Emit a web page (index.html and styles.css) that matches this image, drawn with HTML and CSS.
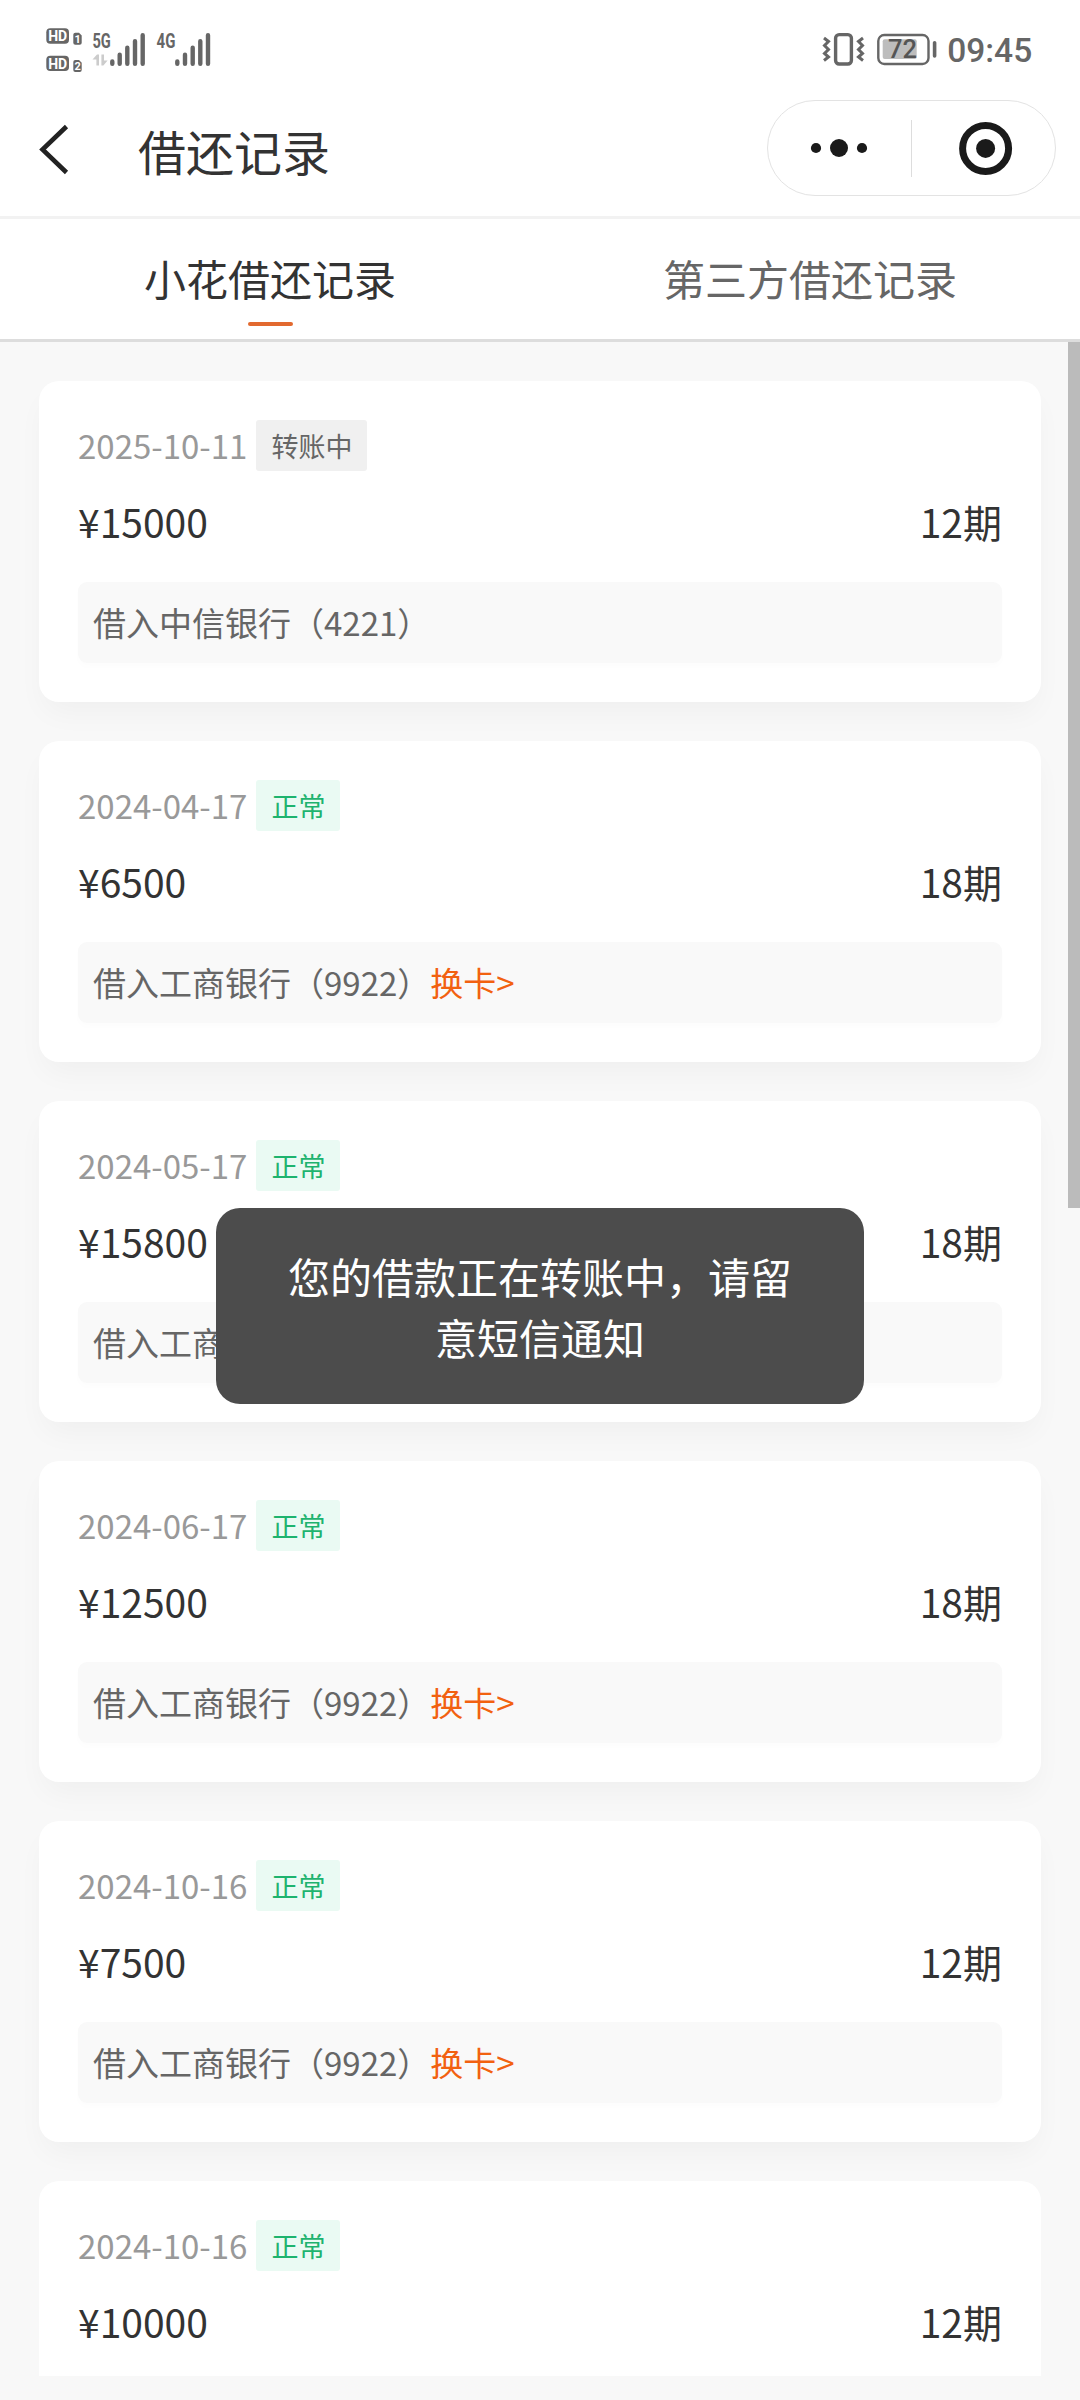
FILE: index.html
```html
<!DOCTYPE html>
<html lang="zh-CN">
<head>
<meta charset="utf-8">
<title>借还记录</title>
<link rel="stylesheet" href="styles.css">
</head>
<body>
<div class="screen">
  <header class="status">
    <svg class="status-left" width="190" height="80" viewBox="0 0 190 80" fill="#666">
      <rect x="16.3" y="18.3" width="22.7" height="15.4" rx="4"/>
      <path d="M45.3 22.7H49L51.7 25.4V32.7A2 2 0 0 1 49.7 34.7H45.3A2 2 0 0 1 43.3 32.7V24.7A2 2 0 0 1 45.3 22.7Z"/>
      <rect x="16.3" y="45.7" width="22.7" height="15.4" rx="4"/>
      <path d="M45.3 50H49L51.7 52.7V60A2 2 0 0 1 49.7 62H45.3A2 2 0 0 1 43.3 60V52A2 2 0 0 1 45.3 50Z"/>
      <g class="hd">
        <text x="18.2" y="31.2" textLength="19" lengthAdjust="spacingAndGlyphs">HD</text>
        <text x="18.2" y="58.6" textLength="19" lengthAdjust="spacingAndGlyphs">HD</text>
      </g>
      <g class="sim">
        <text x="44.6" y="32.8">1</text>
        <text x="44.6" y="60.1">2</text>
      </g>
      <g class="net">
        <text x="62.4" y="37.6" textLength="18.4" lengthAdjust="spacingAndGlyphs">5G</text>
        <text x="126.6" y="37.6" textLength="18.8" lengthAdjust="spacingAndGlyphs">4G</text>
      </g>
      <path d="M62.5 49.6L67 44.6H69V55.4H66.4V49.6ZM71.4 44.6H74V50.6H77.6L73.4 55.4H71.4Z" fill="#ccc"/>
      <g stroke="#666" stroke-width="4.4" stroke-linecap="round">
        <path d="M82.3 51.4V53.8M89.7 44.8V53.8M97.3 37.8V53.8M105 31.2V53.8M112.7 25.2V53.8"/>
        <path d="M147.3 51.4V53.8M155 44.8V53.8M162.7 37.8V53.8M170.3 31.2V53.8M178 25.2V53.8"/>
      </g>
    </svg>
    <svg class="status-right" width="260" height="80" viewBox="0 0 260 80" fill="none" stroke="#666">
      <rect x="35.6" y="24.6" width="15.8" height="29.4" rx="3.5" stroke-width="3.4"/>
      <path d="M24 28L28.5 31.5L24.5 35.5L28.5 39.5L24.5 43.5L28.5 47L24 50.5M63 28L58.5 31.5L62.5 35.5L58.5 39.5L62.5 43.5L58.5 47L63 50.5" stroke-width="3"/>
      <rect x="78.3" y="25" width="50.2" height="29" rx="6" stroke-width="2.4"/>
      <rect x="82.7" y="29.3" width="34" height="19.7" rx="2" fill="#bdbdbd" stroke="none"/>
      <path d="M134.6 32.8V46" stroke-width="3.6" stroke-linecap="round"/>
      <text class="battery" x="88" y="48.4" textLength="29" lengthAdjust="spacingAndGlyphs">72</text>
      <text class="time" x="147.2" y="51.6" textLength="85" lengthAdjust="spacingAndGlyphs">09:45</text>
    </svg>
  </header>

  <nav class="nav">
    <svg class="back" width="30" height="52" viewBox="0 0 30 52" fill="none" stroke="#222" stroke-width="4.6"><path d="M27.5 3.5L3.5 26.5L27.5 49.5"/></svg>
    <h1 class="title">借还记录</h1>
    <div class="capsule">
      <svg class="more" width="143" height="94" viewBox="0 0 143 94" fill="#1a1a1a"><circle cx="48" cy="47" r="5.1"/><circle cx="71" cy="47" r="9"/><circle cx="94" cy="47" r="5.1"/></svg>
      <span class="divider"></span>
      <svg class="close" width="143" height="94" viewBox="0 0 143 94"><circle cx="73.6" cy="47.4" r="23" fill="none" stroke="#1a1a1a" stroke-width="7"/><circle cx="73.6" cy="47.4" r="9.5" fill="#1a1a1a"/></svg>
    </div>
  </nav>

  <div class="tabs">
    <div class="tab active">小花借还记录</div>
    <div class="tab">第三方借还记录</div>
  </div>

  <main class="list">
    <section class="card">
      <div class="head"><span class="date">2025-10-11</span><span class="badge pending">转账中</span></div>
      <div class="sum"><span>¥15000</span><span>12期</span></div>
      <div class="bank">借入中信银行（4221）</div>
    </section>
    <section class="card">
      <div class="head"><span class="date">2024-04-17</span><span class="badge">正常</span></div>
      <div class="sum"><span>¥6500</span><span>18期</span></div>
      <div class="bank">借入工商银行（9922）<a class="swap">换卡&gt;</a></div>
    </section>
    <section class="card">
      <div class="head"><span class="date">2024-05-17</span><span class="badge">正常</span></div>
      <div class="sum"><span>¥15800</span><span>18期</span></div>
      <div class="bank">借入工商</div>
    </section>
    <section class="card">
      <div class="head"><span class="date">2024-06-17</span><span class="badge">正常</span></div>
      <div class="sum"><span>¥12500</span><span>18期</span></div>
      <div class="bank">借入工商银行（9922）<a class="swap">换卡&gt;</a></div>
    </section>
    <section class="card">
      <div class="head"><span class="date">2024-10-16</span><span class="badge">正常</span></div>
      <div class="sum"><span>¥7500</span><span>12期</span></div>
      <div class="bank">借入工商银行（9922）<a class="swap">换卡&gt;</a></div>
    </section>
    <section class="card cut">
      <div class="head"><span class="date">2024-10-16</span><span class="badge">正常</span></div>
      <div class="sum"><span>¥10000</span><span>12期</span></div>
    </section>
    <div class="scrollbar"></div>
  </main>

  <div class="toast">您的借款正在转账中，请留意短信通知</div>
</div>
</body>
</html>
```
FILE: styles.css
```css
* { box-sizing: border-box; }

body {
  margin: 0;
  background: #f8f8f8;
  color: #333;
  font-family: "Noto Sans CJK SC", sans-serif;
}

.screen {
  position: relative;
  display: flex;
  flex-direction: column;
  width: 1080px;
  height: 2400px;
  overflow: hidden;
}

.status {
  display: flex;
  justify-content: space-between;
  height: 100px;
  padding: 10px 20px 0 30px;
  background: #fff;
}

.status text { stroke: none; fill: #666; font-family: Roboto, sans-serif; }
.status .hd text { fill: #fff; font-size: 14.5px; font-weight: 700; }
.status .sim text { fill: #fff; font-size: 11px; font-weight: 700; }
.status .net text { font-size: 20px; font-weight: 700; }
.status .battery { fill: #555; font-size: 26px; font-weight: 500; }
.status .time { font-size: 34px; font-weight: 500; }

.nav {
  display: flex;
  align-items: flex-start;
  height: 119px;
  padding: 0 24px 0 39px;
  background: #fff;
  border-bottom: 3px solid #f2f2f2;
}

.back { margin-top: 23px; }

.title {
  flex: 1;
  margin: 0 0 0 69px;
  font-size: 48px;
  font-weight: 400;
  line-height: 101px;
}

.capsule {
  display: flex;
  align-items: center;
  width: 289px;
  height: 96px;
  border: 1px solid #e3e3e3;
  border-radius: 48px;
}

.divider { width: 1px; height: 57px; background: #ddd; }

.tabs {
  display: flex;
  height: 123px;
  background: #fff;
  border-bottom: 3px solid #ddd;
}

.tab {
  display: flex;
  flex: 1;
  flex-direction: column;
  align-items: center;
  color: #666;
  font-size: 42px;
  line-height: 103px;
  padding-top: 7px;
}

.tab.active { color: #333; }

.tab.active::after {
  width: 45px;
  height: 4px;
  margin-top: -7px;
  border-radius: 2px;
  background: #e2692f;
  content: "";
}

.list {
  position: relative;
  display: flex;
  flex-direction: column;
  gap: 39px;
  height: 2034px;
  padding: 39px 39px 0;
  overflow: hidden;
}

.card {
  flex: none;
  height: 321px;
  padding: 39px;
  border-radius: 20px;
  background: #fff;
  box-shadow: 0 15px 30px -5px rgba(0, 0, 0, 0.04);
}

.cut { height: 195px; border-radius: 20px 20px 0 0; box-shadow: none; }

.head { display: flex; gap: 9px; height: 51px; line-height: 51px; }
.date { color: #999; font-size: 33px; }

.badge {
  padding: 0 15px;
  border-radius: 3px;
  background: #eafaf3;
  color: #1eb36e;
  font-size: 27px;
}

.pending { background: #f0f0f0; color: #666; }

.sum {
  display: flex;
  justify-content: space-between;
  height: 60px;
  margin: 20px 0 31px;
  font-size: 39px;
  line-height: 61px;
}

.bank {
  height: 81px;
  padding: 0 15px;
  border-radius: 9px;
  background: #f9f9f9;
  box-shadow: 0 4px 6px rgba(0, 0, 0, 0.012);
  color: #666;
  font-size: 33px;
  line-height: 81px;
}

.swap { color: #f26110; }

.scrollbar {
  position: absolute;
  top: 0;
  right: 0;
  width: 12px;
  height: 866px;
  background: #bbb;
}

.toast {
  position: absolute;
  top: 1208px;
  left: 216px;
  width: 648px;
  height: 196px;
  padding: 37px 72px;
  border-radius: 24px;
  background: #4c4c4c;
  color: #fff;
  font-size: 42px;
  line-height: 61px;
  text-align: center;
}
```
